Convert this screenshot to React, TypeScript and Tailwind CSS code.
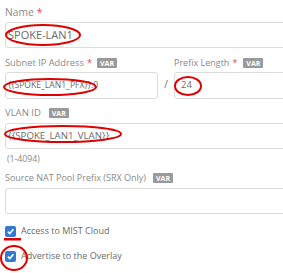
import React from "react";

const font = { fontFamily: '"Open Sans", "Liberation Sans", sans-serif' };

function Var({ ml = "ml-[6px]" }: { ml?: string }) {
  return (
    <span
      className={`${ml} inline-flex h-[10px] items-center rounded-[1px] bg-[#9a9a9a] px-[3px] text-[7px] font-bold leading-none text-white`}
    >
      VAR
    </span>
  );
}

function Label({
  children,
  req,
  v,
  size = "text-[9.5px]",
  varMl,
}: {
  children: React.ReactNode;
  req?: boolean;
  v?: boolean;
  size?: string;
  varMl?: string;
}) {
  return (
    <div className={`flex h-[14px] items-center leading-[14px] text-[#8a8a8a] ${size}`}>
      <span>{children}</span>
      {req && <span className="ml-[3px] text-[#e04848]">*</span>}
      {v && <Var ml={varMl} />}
    </div>
  );
}

function Input({
  value,
  className = "",
  size = "text-[10px]",
}: {
  value?: string;
  className?: string;
  size?: string;
}) {
  return (
    <div
      className={`flex h-[26px] items-center rounded-[3px] border border-[#dcdcdc] bg-white pl-[2px] text-[#6a6a6a] ${size} ${className}`}
    >
      {value}
    </div>
  );
}

function Check({ label }: { label: string }) {
  return (
    <div className="flex h-[12px] items-center">
      <div className="flex h-[11px] w-[11px] items-center justify-center rounded-[2px] bg-[#2f7bd2]">
        <svg width="9" height="9" viewBox="0 0 10 10">
          <path d="M2 5.2 L4.2 7.3 L8.2 2.6" fill="none" stroke="white" strokeWidth="1.8" />
        </svg>
      </div>
      <span className="ml-[5px] text-[9px] leading-[14px] text-[#6a6a6a]">{label}</span>
    </div>
  );
}

export default function App() {
  return (
    <div className="relative h-[273px] w-[283px] overflow-hidden bg-white" style={font}>
      <div className="w-[340px] pl-[5px] pt-[5px]">
        <Label req size="text-[10.3px]">
          Name
        </Label>
        <Input value="SPOKE-LAN1" size="text-[11px]" className="mt-[3px]" />

        <div className="mt-[8px] flex">
          <div className="w-[153px]">
            <Label req v size="text-[9.3px]" varMl="ml-[5px]">
              Subnet IP Address
            </Label>
            <Input value="{{SPOKE_LAN1_PFX}}.0" size="text-[8.6px]" className="mt-[2px] h-[27px]" />
          </div>
          <div className="flex w-[16px] items-end justify-center pb-[7px] text-[10px] text-[#6a6a6a]">/</div>
          <div className="flex-1">
            <Label req v size="text-[9px]">
              Prefix Length
            </Label>
            <Input value="24" size="text-[9.5px]" className="mt-[2px] h-[27px] pl-[6px]" />
          </div>
        </div>

        <div className="mt-[7px]">
          <Label v size="text-[9.5px]" varMl="ml-[8px]">
            VLAN ID
          </Label>
        </div>
        <Input value="{{SPOKE_LAN1_VLAN}}" size="text-[9.7px]" className="mt-[3px]" />
        <div className="mt-[3px] h-[14px] pl-[2px] text-[8.7px] leading-[14px] text-[#8a8a8a]">(1-4094)</div>

        <div className="mt-[5px]">
          <Label v size="text-[9px]" varMl="ml-[7px]">
            Source NAT Pool Prefix (SRX Only)
          </Label>
        </div>
        <Input className="mt-[3px]" />

        <div className="mt-[11px]">
          <Check label="Access to MIST Cloud" />
        </div>
        <div className="mt-[13px]">
          <Check label="Advertise to the Overlay" />
        </div>
      </div>

      {/* red annotations */}
      <svg className="pointer-events-none absolute left-0 top-0" width="283" height="273">
        <g fill="none" stroke="#e00000" strokeWidth="2">
          <ellipse cx="43" cy="35" rx="37" ry="10" />
          <ellipse cx="50" cy="87" rx="46" ry="8" />
          <ellipse cx="188" cy="86" rx="13" ry="9" />
          <ellipse cx="63" cy="134" rx="58" ry="8" />
          <ellipse cx="14" cy="258" rx="13" ry="12" />
        </g>
        <rect x="4" y="238" width="17" height="2.5" fill="#e00000" />
      </svg>
    </div>
  );
}
